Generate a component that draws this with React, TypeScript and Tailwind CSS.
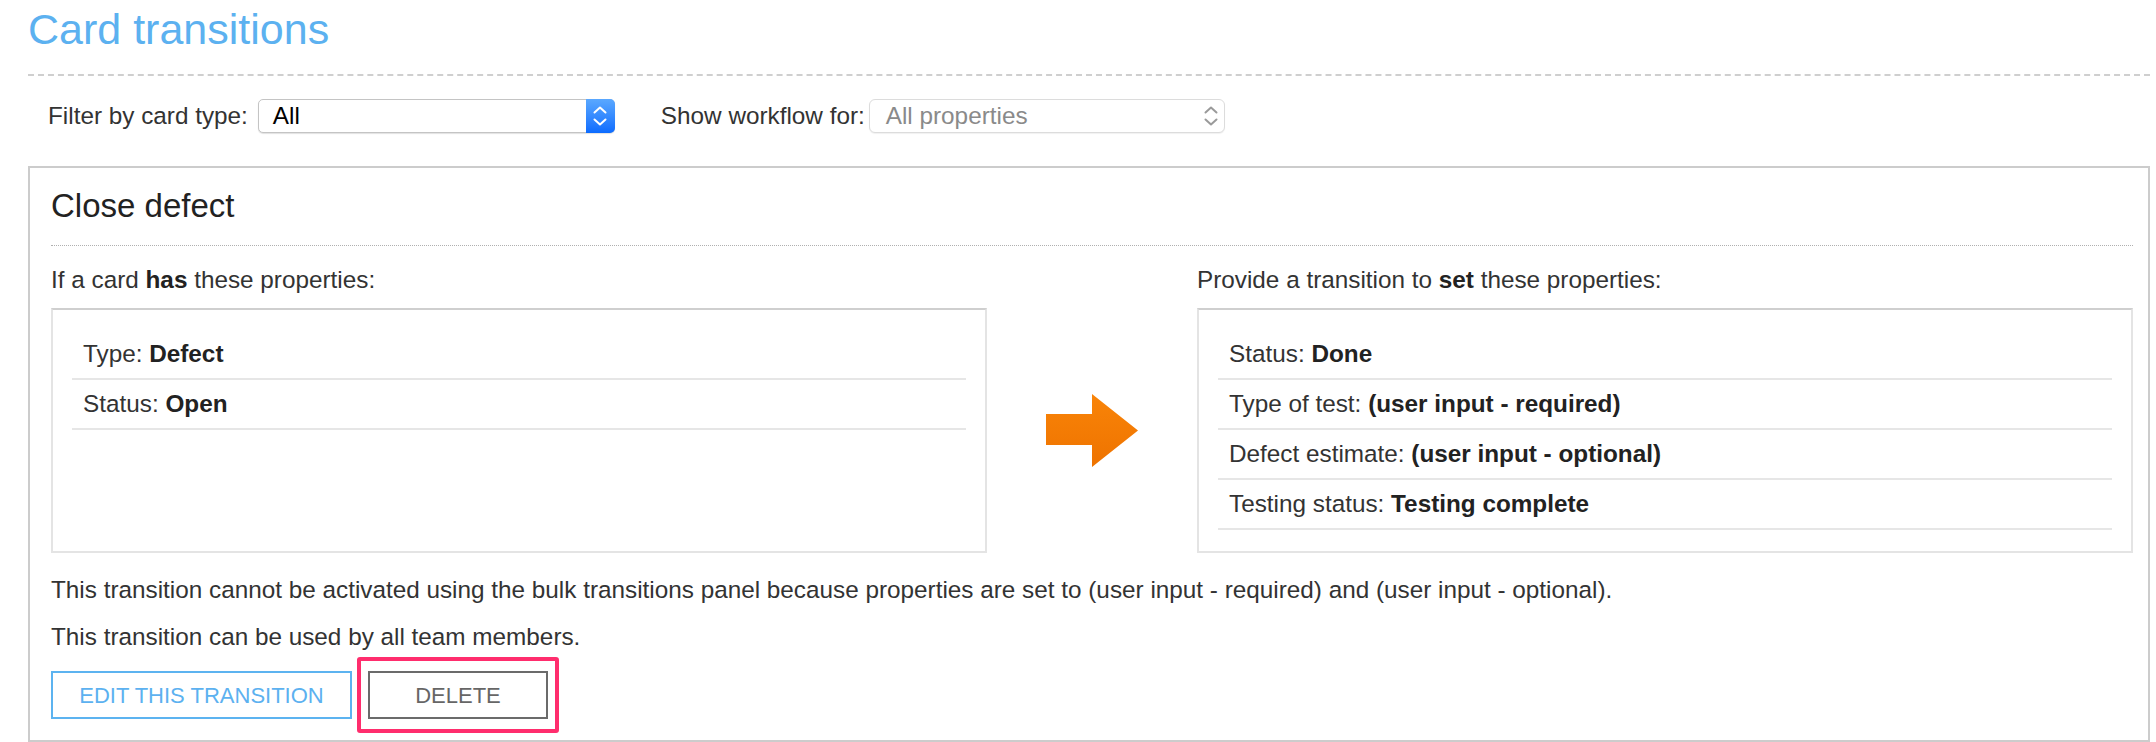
import React from "react";

const Chevrons = ({ color }: { color: string }) => (
  <svg width="14" height="20" viewBox="0 0 14 20" fill="none">
    <path d="M1.5 6.5 L7 1.5 L12.5 6.5" stroke={color} strokeWidth="2" strokeLinecap="round" strokeLinejoin="round" />
    <path d="M1.5 13.5 L7 18.5 L12.5 13.5" stroke={color} strokeWidth="2" strokeLinecap="round" strokeLinejoin="round" />
  </svg>
);

const Arrow = () => (
  <svg width="92" height="73" viewBox="0 0 92 73">
    <defs>
      <linearGradient id="arrowFill" x1="0" y1="0" x2="0" y2="1">
        <stop offset="0" stopColor="#f98408" />
        <stop offset="1" stopColor="#ee7300" />
      </linearGradient>
    </defs>
    <polygon points="0,20 46,20 46,0 92,36.5 46,73 46,51 0,51" fill="url(#arrowFill)" />
  </svg>
);

type Prop = { label: string; value: string };

const PropertyBox = ({ rows }: { rows: Prop[] }) => (
  <div className="flex-1 border-2 border-[#e4e4e4] border-t-[#cfcfcf] px-[19px] pt-[20px] pb-[21px]">
    {rows.map((row) => (
      <div key={row.label} className="h-[50px] border-b-2 border-[#e6e6e6] flex items-center pl-[11px]">
        <span>
          {row.label}: <b className="font-bold text-[#222]">{row.value}</b>
        </span>
      </div>
    ))}
  </div>
);

const App = () => {
  const hasProps: Prop[] = [
    { label: "Type", value: "Defect" },
    { label: "Status", value: "Open" },
  ];
  const setProps: Prop[] = [
    { label: "Status", value: "Done" },
    { label: "Type of test", value: "(user input - required)" },
    { label: "Defect estimate", value: "(user input - optional)" },
    { label: "Testing status", value: "Testing complete" },
  ];

  return (
    <div className="min-h-[742px] bg-white pl-[28px] pr-[6px] font-['Liberation_Sans',Arial,sans-serif] text-[24.3px] text-[#333]">
      <h1 className="pt-[3px] text-[43px] leading-[52px] text-[#5cb1f0]">Card transitions</h1>
      <div className="mt-[19px] border-t-2 border-dashed border-[#cfcfcf]" />

      {/* filters */}
      <div className="mt-[23px] h-[34px] pl-[20px] flex items-center">
        <span className="leading-[30px]">Filter by card type:</span>
        <div className="ml-[10px] w-[357px] h-[34px] flex rounded-[5px] border border-[#c4c4c4] shadow-[0_1px_1px_rgba(0,0,0,0.12)] bg-white">
          <span className="flex-1 pl-[14px] flex items-center text-black">All</span>
          <span className="w-[29px] -my-px -mr-px rounded-r-[5px] bg-gradient-to-b from-[#5aa8ff] to-[#0b6bff] flex items-center justify-center">
            <Chevrons color="#ffffff" />
          </span>
        </div>
        <span className="ml-[46px] leading-[30px]">Show workflow for:</span>
        <div className="ml-[4px] w-[356px] h-[34px] flex items-center rounded-[6px] border border-[#dcdcdc] shadow-[0_1px_1px_rgba(0,0,0,0.06)] bg-white">
          <span className="flex-1 pl-[16px] text-[#8a8a8a]">All properties</span>
          <span className="pr-[6px] flex items-center">
            <Chevrons color="#9a9a9a" />
          </span>
        </div>
      </div>

      {/* transition card */}
      <div className="mt-[33px] border-2 border-[#cccccc] pl-[21px] pr-[15px] pb-[21px]">
        <h2 className="pt-[18px] text-[33px] leading-[40px] text-[#222]">Close defect</h2>
        <div className="mt-[19px] border-t border-dotted border-[#b0b0b0]" />

        <div className="mt-[19px] flex">
          <div className="w-[936px] flex flex-col">
            <p className="leading-[30px]">
              If a card <b className="font-bold text-[#222]">has</b> these properties:
            </p>
            <div className="mt-[13px] flex-1 flex">
              <PropertyBox rows={hasProps} />
            </div>
          </div>
          <div className="w-[210px] flex flex-col">
            <div className="h-[43px]" />
            <div className="flex-1 flex items-center justify-center">
              <Arrow />
            </div>
          </div>
          <div className="w-[936px] flex flex-col">
            <p className="leading-[30px]">
              Provide a transition to <b className="font-bold text-[#222]">set</b> these properties:
            </p>
            <div className="mt-[13px] flex-1 flex">
              <PropertyBox rows={setProps} />
            </div>
          </div>
        </div>

        <p className="mt-[22px] leading-[30px]">
          This transition cannot be activated using the bulk transitions panel because properties are set to (user input - required) and (user input - optional).
        </p>
        <p className="mt-[17px] leading-[30px]">This transition can be used by all team members.</p>

        <div className="mt-[19px] flex items-center">
          <button className="w-[301px] h-[48px] border-2 border-[#5cb3f0] text-[22px] text-[#5cb1f0] uppercase">
            Edit this transition
          </button>
          <div className="relative ml-[16px]">
            <button className="w-[180px] h-[48px] border-2 border-[#6b6b6b] text-[22px] text-[#666] uppercase">
              Delete
            </button>
            <span className="pointer-events-none absolute -left-[11px] -right-[11px] -top-[14px] -bottom-[14px] rounded-[3px] border-[4px] border-[#ff2d6d]" />
          </div>
        </div>
      </div>
    </div>
  );
};

export default App;
